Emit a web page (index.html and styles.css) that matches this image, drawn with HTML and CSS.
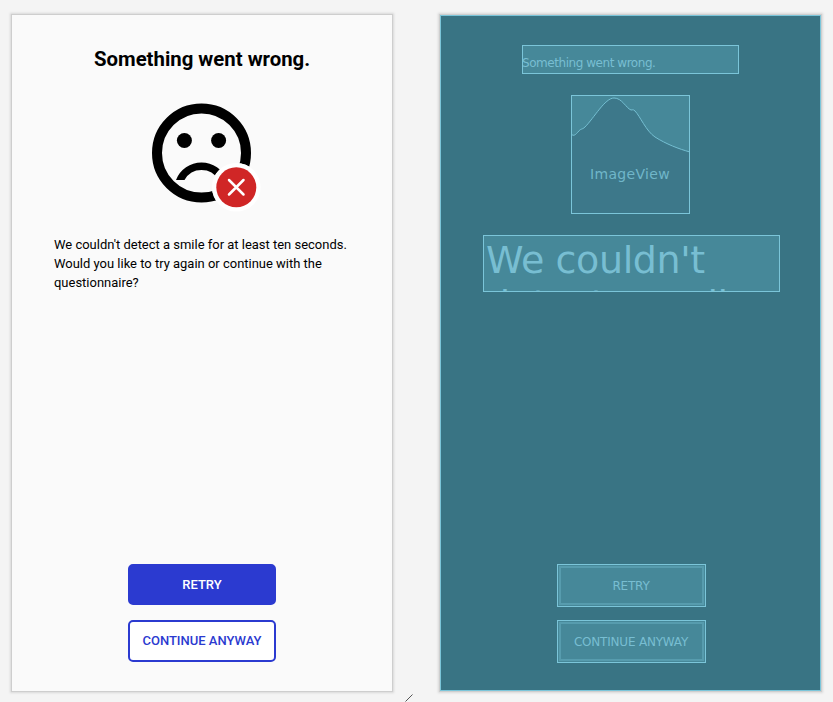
FILE: index.html
```
<!DOCTYPE html>
<html lang="en">
<head>
<meta charset="utf-8">
<title>Layout preview</title>
<link rel="stylesheet" href="styles.css">
</head>
<body>
<main class="canvas">
  <section class="phone design">
    <h1 class="title">Something went wrong.</h1>
    <svg class="face" viewBox="0 0 119 119">
      <circle cx="59.5" cy="58" r="44.5" fill="none" stroke="#000" stroke-width="10"/>
      <circle cx="42.4" cy="45.5" r="7.5"/>
      <circle cx="76.6" cy="45.5" r="7.5"/>
      <path d="M34 85A27.300 27.300 0 0 1 85 85H76.500A19.500 19.500 0 0 0 42.500 85Z"/>
      <circle cx="94.300" cy="92.300" r="24.300" fill="#fafafa"/>
      <circle cx="94.300" cy="92.300" r="24.300" fill="#fff"/>
      <circle cx="94.300" cy="92.300" r="20" fill="#d02626"/>
      <path d="M87 85L101.500 99.500M101.500 85L87 99.500" stroke="#fff" stroke-width="2.500" stroke-linecap="round"/>
    </svg>
    <p class="message">We couldn't detect a smile for at least ten seconds.<br>Would you like to try again or continue with the<br>questionnaire?</p>
    <div class="actions">
      <button class="button primary">RETRY</button>
      <button class="button outlined">CONTINUE ANYWAY</button>
    </div>
  </section>
  <section class="phone blueprint">
    <div class="wire wire-title">Something went wrong.</div>
    <svg class="wire-image" viewBox="0 0 119 119">
      <rect width="119" height="119" fill="#468899"/>
      <path d="M0 39C3 42 5 39 7 37C10 33 11 35 14 32C23 23 34 3 43 3C51 3 55 13 60 15C62 15 62 14 64 16C69 21 75 36 84 42C95 49 108 54 119 57V119H0Z" fill="#3d788a"/>
      <path d="M0 39C3 42 5 39 7 37C10 33 11 35 14 32C23 23 34 3 43 3C51 3 55 13 60 15C62 15 62 14 64 16C69 21 75 36 84 42C95 49 108 54 119 57" fill="none" stroke="#75bfd2"/>
      <rect x=".5" y=".5" width="118" height="118" fill="none" stroke="#7bc5d9"/>
      <text class="image-label" x="59" y="84" text-anchor="middle">ImageView</text>
    </svg>
    <div class="wire wire-message">We couldn't<br>detect a smile</div>
    <div class="wire-actions">
      <div class="wire wire-button"><span>RETRY</span></div>
      <div class="wire wire-button"><span>CONTINUE ANYWAY</span></div>
    </div>
  </section>
  <svg class="resize-handle" viewBox="0 0 8 8"><path d="M.5 7.500L7.500.5" stroke="#555"/></svg>
</main>
</body>
</html>
```
FILE: styles.css
```
* { box-sizing: border-box; }
body { margin: 0; background: #f4f4f4; font-family: Roboto, sans-serif; }
.canvas {
  position: relative;
  display: flex;
  gap: 48px;
  width: 833px;
  height: 702px;
  padding: 15px 0 0 12px;
  overflow: hidden;
}
.phone {
  display: flex;
  flex-direction: column;
  align-items: center;
  height: 676px;
  flex: none;
  box-shadow: 0 0 0 1px #cecece, 0 0 2px 2px #d8d8d8;
}
.design { width: 380px; padding-top: 30px; background: #fafafa; }
.title {
  width: 217px;
  height: 29px;
  margin: 0;
  padding-left: .5px;
  font-size: 20.350px;
  line-height: 29px;
  font-weight: 700;
  white-space: nowrap;
}
.face { width: 119px; height: 119px; margin: 21px 2px 0 0; overflow: visible; }
.message {
  width: 297px;
  height: 57px;
  margin: 21px 0 0;
  padding-left: .5px;
  font-size: 12.970px;
  line-height: 19px;
  white-space: nowrap;
}
.actions { display: flex; flex-direction: column; gap: 15px; margin: auto 0 29.500px; }
.button {
  width: 148px;
  height: 41.500px;
  padding: 0;
  border: 2px solid #2b3ad0;
  border-radius: 5px;
  font: 500 13px/37px Roboto, sans-serif;
  white-space: nowrap;
}
.primary { background: #2b3ad0; color: #fff; }
.outlined { background: #fff; color: #2b3ad0; }
.blueprint {
  width: 381px;
  padding-top: 29px;
  border: 1px solid #7bc5d9;
  background: #397484;
  font-family: "DejaVu Sans", sans-serif;
  color: #78bed2;
}
.wire {
  border: 1px solid #7bc5d9;
  background: #468899;
  overflow: hidden;
  white-space: nowrap;
}
.wire-title {
  width: 217px;
  height: 29px;
  font-size: 12px;
  line-height: 34px;
  letter-spacing: -.45px;
  text-indent: -1px;
}
.wire-image { width: 119px; height: 119px; margin-top: 21px; }
.image-label { fill: #70b6c9; font-size: 14px; letter-spacing: .3px; }
.wire-message {
  width: 297px;
  height: 57px;
  margin: 21px 0 0 2px;
  padding: 2px 0 0 2px;
  font-size: 38px;
  line-height: 44px;
  letter-spacing: -.4px;
}
.wire-actions { display: flex; flex-direction: column; gap: 13px; margin: auto 0 27px 2px; }
.wire-button {
  display: flex;
  width: 149px;
  height: 43px;
  padding: 1px;
  font-size: 12px;
  letter-spacing: -.2px;
}
.wire-button span {
  display: flex;
  flex: 1;
  align-items: center;
  justify-content: center;
  padding-right: 1px;
  border: 2px solid #579cae;
}
.resize-handle { position: absolute; left: 405px; top: 694px; width: 8px; height: 8px; }
```
